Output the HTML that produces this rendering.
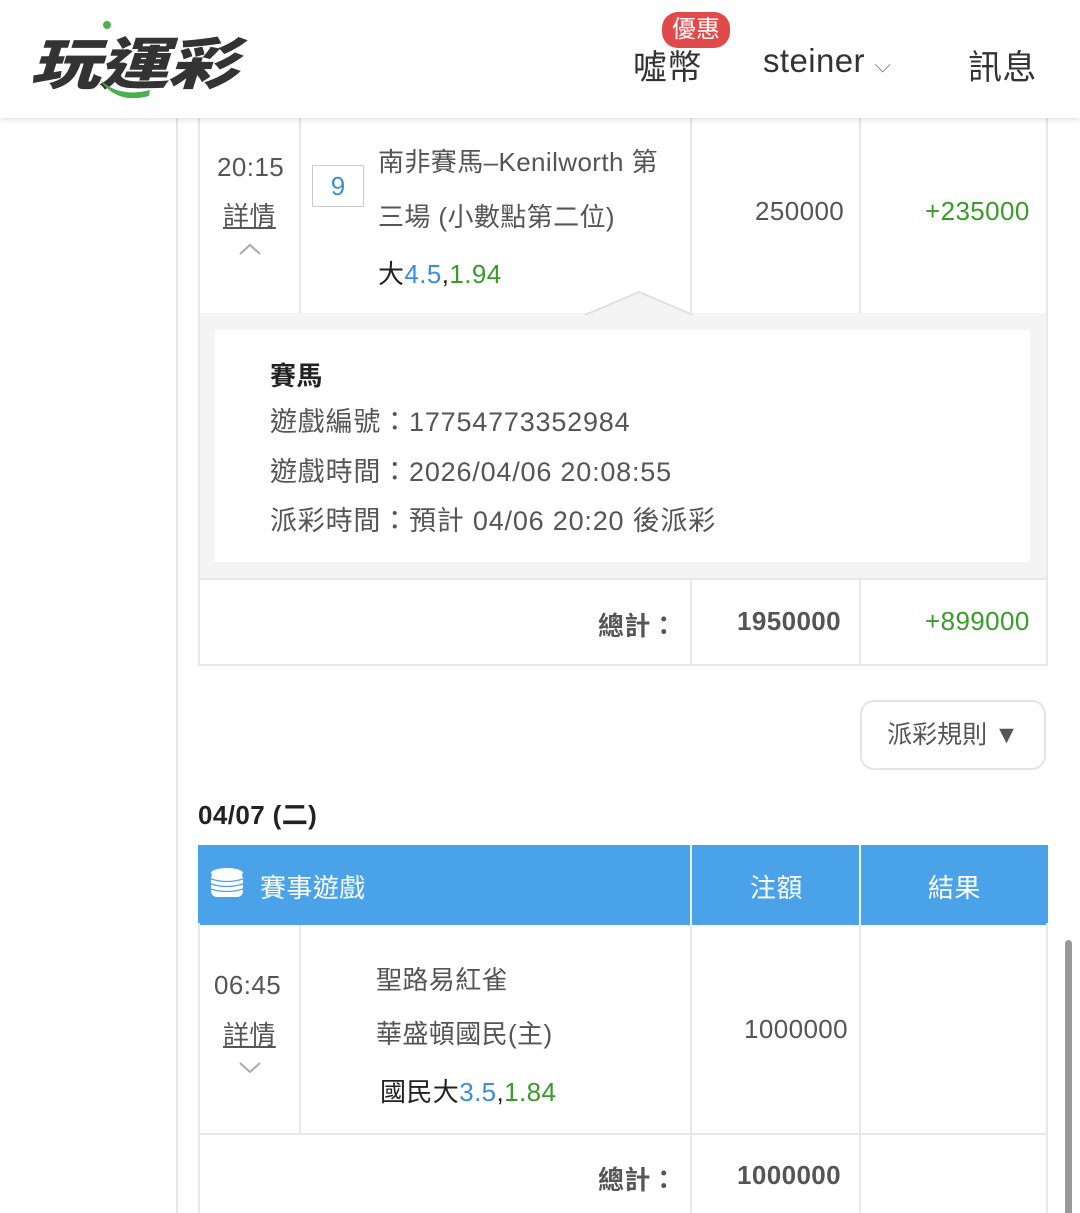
<!DOCTYPE html><html><head><meta charset="utf-8"><style>
*{margin:0;padding:0;box-sizing:border-box}
html,body{width:1080px;height:1213px;overflow:hidden}
body{background:#fff;font-family:"Liberation Sans","Noto Sans CJK TC",sans-serif;color:#555;position:relative}
.a{position:absolute}
.hdr{left:0;top:0;width:1080px;height:118px;background:#fff;box-shadow:0 2px 6px rgba(0,0,0,.12);z-index:5}
.side{left:176px;top:0;width:2px;height:1213px;background:#e6e6e6}
.bx{border:2px solid #e8e8e8}
.vl{width:2px;background:#e8e8e8}
.t{font-size:26px;white-space:nowrap;letter-spacing:0.4px}
.bl{color:#3a8fd6}.gr{color:#3a9a2a}
</style></head><body>
<div class="a side"></div>
<div class="a hdr">
 <div class="a" style="left:30px;top:20px;font-size:56px;font-weight:900;font-style:italic;color:#333;letter-spacing:-1px;transform:scaleX(1.25);transform-origin:left">玩運彩</div>
 <svg class="a" style="left:95px;top:18px" width="60" height="80"><circle cx="12" cy="7" r="4" fill="#4caf50"/><path d="M5 62 Q25 80 55 72 L54 78 Q25 86 8 66Z" fill="#4caf50"/></svg>
 <div class="a t" style="left:633px;top:40px;font-size:34px;color:#333">噓幣</div>
 <div class="a" style="left:662px;top:12px;background:#e04a4a;color:#fff;font-size:24px;border-radius:16px;padding:0 10px;height:36px;line-height:36px">優惠</div>
 <div class="a t" style="left:763px;top:42px;font-size:33px;color:#333">steiner <span style="font-size:22px;color:#888">⌵</span></div>
 <div class="a t" style="left:968px;top:40px;font-size:34px;color:#333">訊息</div>
</div>
<div class="a bx" style="left:198px;top:100px;width:850px;height:215px"></div>
<div class="a vl" style="left:299px;top:100px;height:215px"></div>
<div class="a vl" style="left:690px;top:100px;height:215px"></div>
<div class="a vl" style="left:859px;top:100px;height:215px"></div>
<div class="a t" style="left:217px;top:152px">20:15</div>
<div class="a t" style="left:223px;top:196px;text-decoration:underline">詳情</div>
<svg class="a" style="left:238px;top:242px" width="24" height="14"><path d="M2 12 L12 3 L22 12" fill="none" stroke="#aaa" stroke-width="2"/></svg>
<div class="a" style="left:312px;top:165px;width:52px;height:42px;border:1px solid #ccc;color:#3a8fd6;font-size:26px;text-align:center;line-height:40px">9</div>
<div class="a t" style="left:378px;top:142px">南非賽馬–Kenilworth 第</div>
<div class="a t" style="left:378px;top:197px">三場 (小數點第二位)</div>
<div class="a t" style="left:378px;top:254px;color:#222">大<span class="bl">4.5</span>,<span class="gr">1.94</span></div>
<div class="a t" style="left:755px;top:196px">250000</div>
<div class="a t gr" style="left:925px;top:196px">+235000</div>
<div class="a" style="left:198px;top:313px;width:850px;height:267px;background:#f4f4f4;border-left:2px solid #e8e8e8;border-right:2px solid #e8e8e8"></div>
<svg class="a" style="left:585px;top:290px" width="110" height="26"><path d="M0 25 L54 2 L108 25" fill="#f4f4f4" stroke="#e0e0e0" stroke-width="2"/></svg>
<div class="a" style="left:215px;top:330px;width:815px;height:232px;background:#fff"></div>
<div class="a t" style="left:270px;top:356px;font-weight:bold;color:#222">賽馬</div>
<div class="a t" style="left:270px;top:400px;font-size:27px;letter-spacing:0.8px">遊戲編號：17754773352984</div>
<div class="a t" style="left:270px;top:450px;font-size:27px;letter-spacing:0.8px">遊戲時間：2026/04/06 20:08:55</div>
<div class="a t" style="left:270px;top:499px;font-size:27px;letter-spacing:0.8px">派彩時間：預計 04/06 20:20 後派彩</div>
<div class="a bx" style="left:198px;top:578px;width:850px;height:88px"></div>
<div class="a vl" style="left:690px;top:578px;height:88px"></div>
<div class="a vl" style="left:859px;top:578px;height:88px"></div>
<div class="a t" style="left:598px;top:606px;font-weight:bold">總計：</div>
<div class="a t" style="left:737px;top:606px;font-weight:bold">1950000</div>
<div class="a t gr" style="left:925px;top:606px">+899000</div>
<div class="a" style="left:860px;top:700px;width:186px;height:70px;border:2px solid #e4e4e4;border-radius:14px;font-size:25px;line-height:66px;text-align:center">派彩規則 ▼</div>
<div class="a t" style="left:198px;top:795px;font-weight:bold;color:#222">04/07 (二)</div>
<div class="a" style="left:198px;top:845px;width:850px;height:80px;background:#4aa3e8"></div>
<div class="a vl" style="left:690px;top:845px;height:80px;background:#e8f2fb"></div>
<div class="a vl" style="left:859px;top:845px;height:80px;background:#e8f2fb"></div>
<svg class="a" style="left:210px;top:867px" width="36" height="36"><g fill="#fff"><ellipse cx="17" cy="6" rx="16" ry="5"/><rect x="1" y="6" width="32" height="24" rx="6"/></g><g stroke="#4aa3e8" stroke-width="1.2" fill="none"><path d="M1 12 Q17 17 33 12M1 17 Q17 22 33 17M1 22 Q17 27 33 22"/></g></svg>
<div class="a t" style="left:260px;top:868px;color:#fff">賽事遊戲</div>
<div class="a t" style="left:750px;top:868px;color:#fff">注額</div>
<div class="a t" style="left:928px;top:868px;color:#fff">結果</div>
<div class="a bx" style="left:198px;top:923px;width:850px;height:212px;border-top:none"></div>
<div class="a vl" style="left:299px;top:925px;height:210px"></div>
<div class="a vl" style="left:690px;top:925px;height:210px"></div>
<div class="a vl" style="left:859px;top:925px;height:210px"></div>
<div class="a t" style="left:214px;top:970px">06:45</div>
<div class="a t" style="left:223px;top:1015px;text-decoration:underline">詳情</div>
<svg class="a" style="left:238px;top:1061px" width="24" height="14"><path d="M2 2 L12 11 L22 2" fill="none" stroke="#aaa" stroke-width="2"/></svg>
<div class="a t" style="left:376px;top:960px">聖路易紅雀</div>
<div class="a t" style="left:376px;top:1014px">華盛頓國民(主)</div>
<div class="a t" style="left:380px;top:1072px;color:#222">國民大<span class="bl">3.5</span>,<span class="gr">1.84</span></div>
<div class="a t" style="left:744px;top:1014px">1000000</div>
<div class="a bx" style="left:198px;top:1133px;width:850px;height:100px"></div>
<div class="a vl" style="left:690px;top:1133px;height:100px"></div>
<div class="a vl" style="left:859px;top:1133px;height:100px"></div>
<div class="a t" style="left:598px;top:1160px;font-weight:bold">總計：</div>
<div class="a t" style="left:737px;top:1160px;font-weight:bold">1000000</div>
<div class="a" style="left:1065px;top:940px;width:7px;height:280px;background:#999;border-radius:4px"></div>
</body></html>
